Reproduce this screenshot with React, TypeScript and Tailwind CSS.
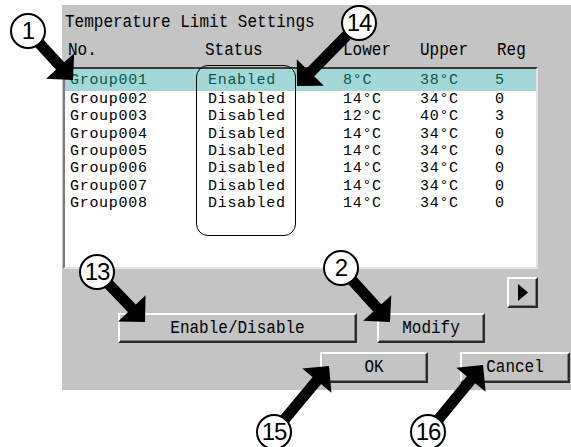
import React from 'react'

const rows = [
  ['Group001', 'Enabled', '8°C', '38°C', '5'],
  ['Group002', 'Disabled', '14°C', '34°C', '0'],
  ['Group003', 'Disabled', '12°C', '40°C', '3'],
  ['Group004', 'Disabled', '14°C', '34°C', '0'],
  ['Group005', 'Disabled', '14°C', '34°C', '0'],
  ['Group006', 'Disabled', '14°C', '34°C', '0'],
  ['Group007', 'Disabled', '14°C', '34°C', '0'],
  ['Group008', 'Disabled', '14°C', '34°C', '0'],
]

// callout arrows: circle centre -> arrow tip
const arrows: Array<[number, number, number, number]> = [
  [28, 31, 73, 80],
  [359, 23, 297, 86],
  [97, 272, 145, 322],
  [341, 268, 390, 322],
  [274, 432, 329, 366],
  [428, 432, 483, 365],
]

function T({ children }: { children: React.ReactNode }) {
  return <span className="inline-block scale-y-[1.2] whitespace-pre leading-[13px]">{children}</span>
}

function Arrow({ x1, y1, x2, y2 }: { x1: number; y1: number; x2: number; y2: number }) {
  const len = Math.hypot(x2 - x1, y2 - y1)
  const ux = (x2 - x1) / len
  const uy = (y2 - y1) / len
  const h = 19
  const bx = x2 - ux * h
  const by = y2 - uy * h
  const px = -uy * 19
  const py = ux * 19
  return (
    <g>
      <line x1={x1 + ux * 16} y1={y1 + uy * 16} x2={bx + ux * 2} y2={by + uy * 2} stroke="#000" strokeWidth={11} />
      <polygon points={`${x2},${y2} ${bx + px},${by + py} ${bx - px},${by - py}`} fill="#000" />
    </g>
  )
}

function Btn({ label, className }: { label: string; className: string }) {
  return (
    <button
      className={`flex items-center justify-center border-2 border-t-white border-l-white border-r-[#2a2a2a] border-b-[#2a2a2a] bg-[#c4c4c4] shadow-[inset_-1px_-1px_0_#7c7c7c] ${className}`}
    >
      <T>{label}</T>
    </button>
  )
}

function Callout({ n, className }: { n: string; className: string }) {
  return (
    <div
      className={`absolute flex h-[36px] w-[36px] items-center justify-center rounded-full border-[2.5px] border-black bg-white font-['Liberation_Sans',sans-serif] text-[24px] leading-none tracking-[-1px] ${className}`}
    >
      {n}
    </div>
  )
}

export default function App() {
  return (
    <div className="relative h-[447px] w-[571px] overflow-hidden bg-white font-['Liberation_Mono',monospace] text-[16px] text-black">
      {/* dialog panel */}
      <div className="ml-[62px] mt-[5px] flex h-[385px] w-[509px] flex-col bg-[#c4c4c4]">
        <div className="flex h-[32px] items-center pl-[3px] pt-[2px]">
          <T>Temperature Limit Settings</T>
        </div>

        <div className="grid h-[26px] grid-cols-[137px_138px_77px_77px_1fr] items-center pl-[6px]">
          <T>No.</T>
          <T>Status</T>
          <T>Lower</T>
          <T>Upper</T>
          <T>Reg</T>
        </div>

        {/* list */}
        <div className="mt-[4px] ml-[1px] h-[202px] w-[475px] border-2 border-t-[#3a3a3a] border-l-[#7a7a7a] border-r-[#e4e4e4] border-b-[#e4e4e4] bg-white text-[15px] tracking-[0.7px]">
          {rows.map((r, i) => (
            <div
              key={r[0]}
              className={`grid grid-cols-[138px_135px_77px_75px_1fr] items-center pl-[5px] leading-[17px] ${
                i === 0 ? 'h-[22px] bg-[#a3d8d8] text-[#0b5548]' : 'h-[17.3px]'
              }`}
            >
              {r.map((c, j) => (
                <span key={j} className="whitespace-pre">
                  {c}
                </span>
              ))}
            </div>
          ))}
        </div>

        <div className="mt-[8px] flex justify-end pr-[33px]">
          <button className="flex h-[31px] w-[31px] items-center justify-center border-2 border-t-white border-l-white border-r-[#2a2a2a] border-b-[#2a2a2a] bg-[#c4c4c4] shadow-[inset_-1px_-1px_0_#7c7c7c]">
            <svg width="10" height="17" viewBox="0 0 10 17">
              <polygon points="0,0 10,8.5 0,17" fill="#000" />
            </svg>
          </button>
        </div>

        <div className="mt-[5px] flex gap-[20px] pl-[56px]">
          <Btn label="Enable/Disable" className="h-[30px] w-[239px]" />
          <Btn label="Modify" className="h-[30px] w-[108px]" />
        </div>

        <div className="mt-[9px] flex gap-[32px] pl-[258px]">
          <Btn label="OK" className="h-[31px] w-[108px]" />
          <Btn label="Cancel" className="h-[31px] w-[110px]" />
        </div>
      </div>

      {/* rounded outline around status column */}
      <div className="pointer-events-none absolute left-[196px] top-[65px] h-[171px] w-[100px] rounded-[12px] border-[1.5px] border-black" />

      {/* callout arrows */}
      <svg className="pointer-events-none absolute inset-0" width="571" height="447">
        {arrows.map(([a, b, c, d], i) => (
          <Arrow key={i} x1={a} y1={b} x2={c} y2={d} />
        ))}
      </svg>

      <Callout n="1" className="left-[10px] top-[13px]" />
      <Callout n="14" className="left-[341px] top-[5px]" />
      <Callout n="13" className="left-[79px] top-[254px]" />
      <Callout n="2" className="left-[323px] top-[250px]" />
      <Callout n="15" className="left-[256px] top-[414px]" />
      <Callout n="16" className="left-[410px] top-[414px]" />
    </div>
  )
}
